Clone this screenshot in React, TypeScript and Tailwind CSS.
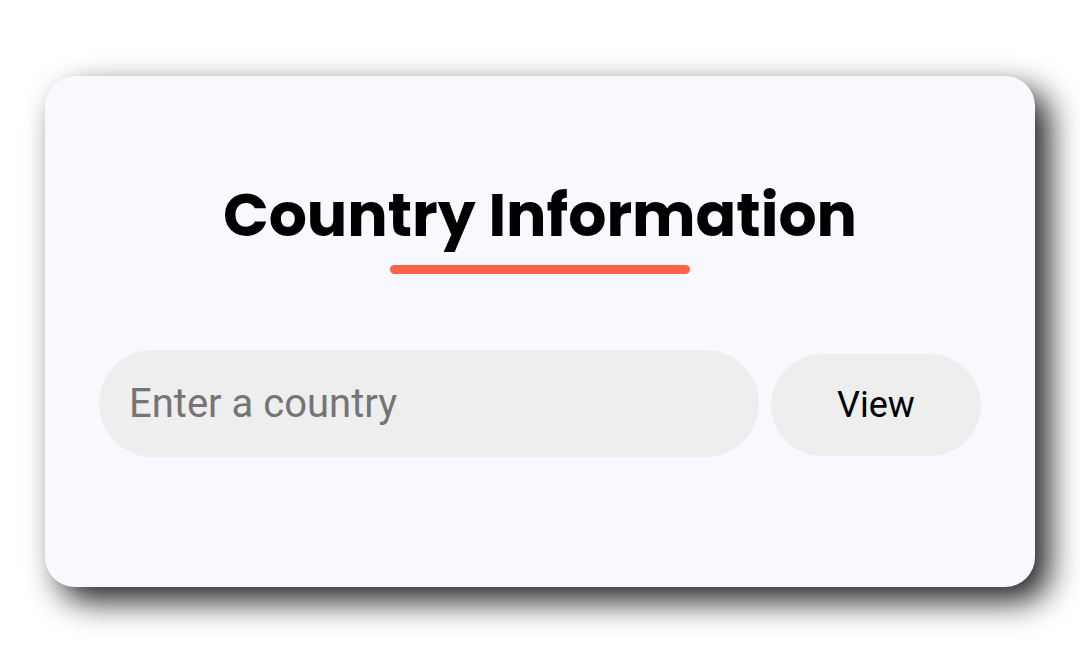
export default function App() {
  return (
    <main className="min-h-screen bg-white px-[45px] pt-[76px] font-['Roboto',sans-serif]">
      <section className="flex flex-col items-center rounded-[30px] bg-[#f8f8ff] px-[54px] pt-[97px] pb-[130px] shadow-[14px_14px_32px_rgba(0,0,0,0.87)]">
        <h1 className="font-['Poppins','Inter',sans-serif] text-[60px] leading-[84px] font-bold text-black">
          Country Information
        </h1>
        <div className="mt-2 h-[9px] w-[300px] rounded-full bg-[#ff6347]" />
        <form className="mt-[76px] flex w-full items-baseline gap-3" onSubmit={(e) => e.preventDefault()}>
          <input
            type="text"
            aria-label="Country"
            placeholder="Enter a country"
            className="h-[107px] min-w-0 flex-1 rounded-full bg-[#eee] px-[30px] text-[40px] text-black outline-none placeholder:text-[#757575]"
          />
          <button type="submit" className="h-[102px] w-[210px] rounded-full bg-[#eee] text-[36px] text-black">
            View
          </button>
        </form>
      </section>
    </main>
  );
}
